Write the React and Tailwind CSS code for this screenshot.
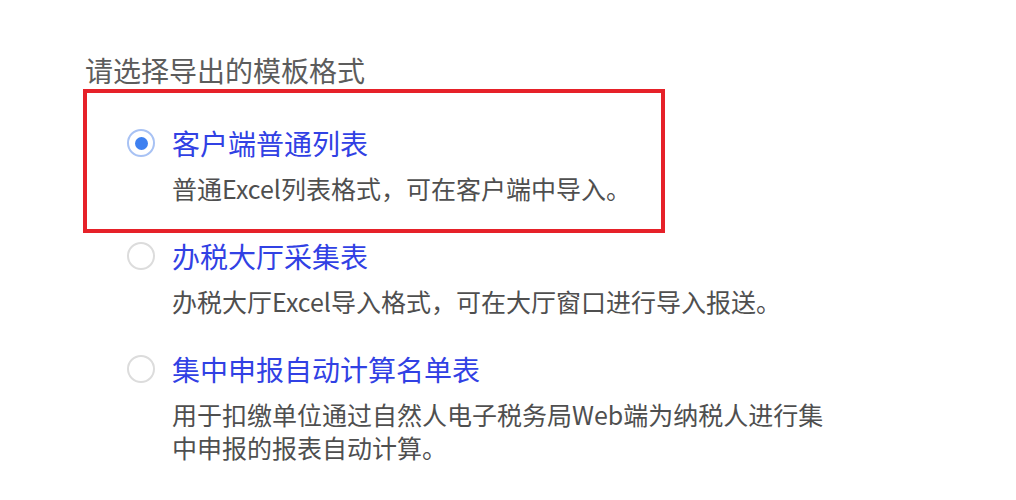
import React, { useState } from "react";

const options = [
  {
    key: "client",
    label: "客户端普通列表",
    desc: ["普通Excel列表格式，可在客户端中导入。"],
  },
  {
    key: "hall",
    label: "办税大厅采集表",
    desc: ["办税大厅Excel导入格式，可在大厅窗口进行导入报送。"],
  },
  {
    key: "auto",
    label: "集中申报自动计算名单表",
    desc: [
      "用于扣缴单位通过自然人电子税务局Web端为纳税人进行集",
      "中申报的报表自动计算。",
    ],
  },
];

const Radio = ({ checked }) => (
  <span
    className={
      checked
        ? "flex h-[28px] w-[28px] shrink-0 items-center justify-center rounded-full border-2 border-[#a8c2f4] bg-white"
        : "flex h-[28px] w-[28px] shrink-0 items-center justify-center rounded-full border-2 border-[#dcdcdc] bg-white"
    }
  >
    {checked && <span className="h-[13px] w-[13px] rounded-full bg-[#3e80f0]" />}
  </span>
);

const App = () => {
  const [selected, setSelected] = useState("client");

  return (
    <div
      className="min-h-[500px] w-[1016px] bg-white pt-[52px]"
      style={{ fontFamily: '"Noto Sans CJK SC", "Noto Sans", sans-serif' }}
    >
      <h1 className="pl-[85px] text-[28px] font-normal leading-[36px] text-[#5c5c5c]">
        请选择导出的模板格式
      </h1>

      <div className="mt-[35px] flex flex-col gap-[31px] pl-[127px]">
        {options.map((opt, i) => (
          <div key={opt.key} className="relative">
            {/* 标注框 */}
            {i === 0 && (
              <div className="pointer-events-none absolute left-[-44px] top-[-34px] h-[144px] w-[582px] border-4 border-[#e62129]" />
            )}
            <label
              className="flex cursor-pointer items-center gap-[17px]"
              onClick={() => setSelected(opt.key)}
            >
              <Radio checked={selected === opt.key} />
              <span className="text-[28px] leading-[40px] text-[#3141e4]">
                {opt.label}
              </span>
            </label>
            <div className="mt-[9px] pl-[45px] text-[25px] leading-[33px] text-[#4f4f4f]">
              {opt.desc.map((line) => (
                <p key={line}>{line}</p>
              ))}
            </div>
          </div>
        ))}
      </div>
    </div>
  );
};

export default App;
